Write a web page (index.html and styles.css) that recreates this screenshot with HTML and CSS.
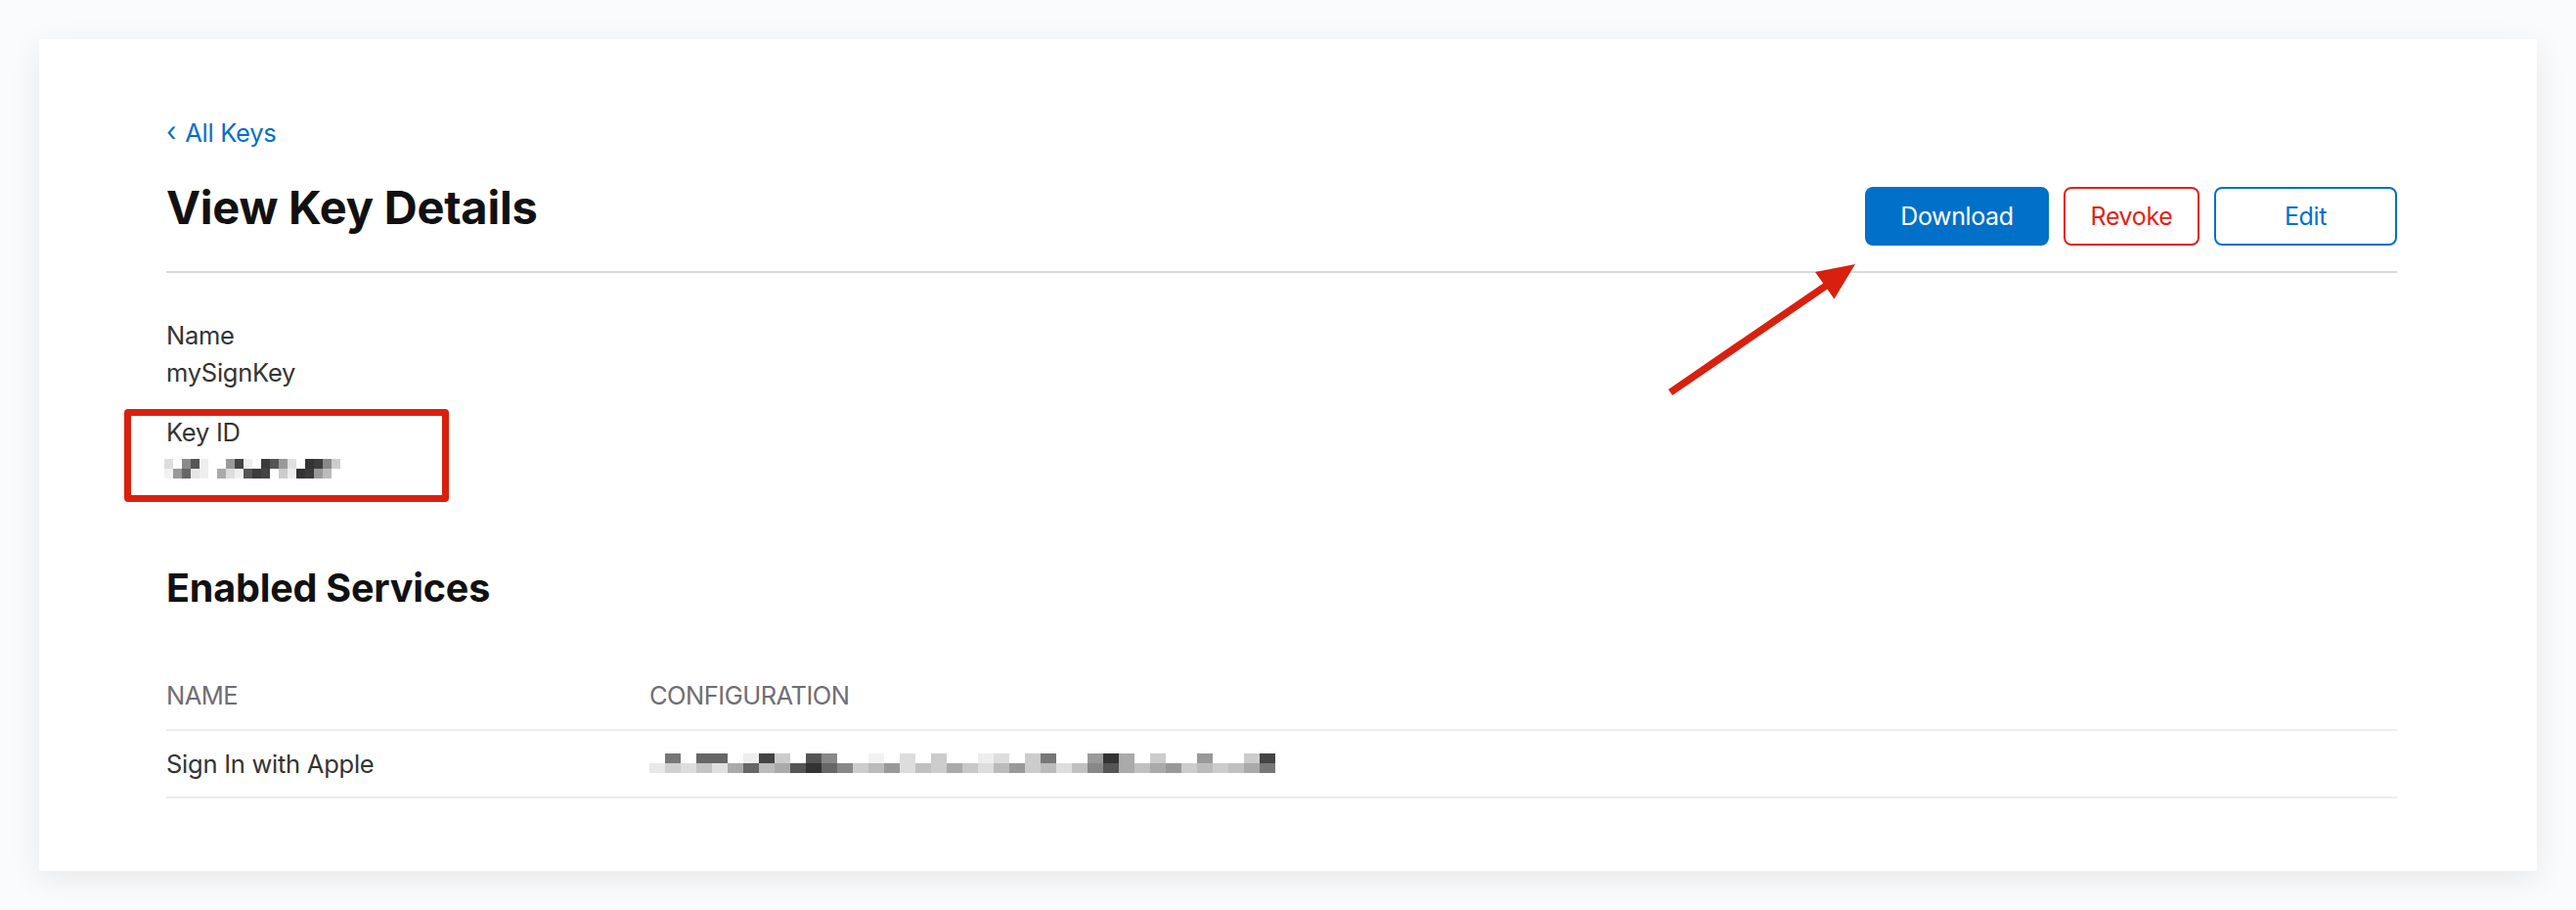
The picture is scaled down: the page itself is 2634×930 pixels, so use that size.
FILE: index.html
```html
<!DOCTYPE html>
<html lang="en">
<head>
<meta charset="utf-8">
<title>View Key Details</title>
<link rel="stylesheet" href="styles.css">
</head>
<body>
<div class="page">
  <main class="card">
    <a class="back-link" href="#"><span class="chevron">‹</span>All Keys</a>
    <div class="header-row">
      <h1 class="title">View Key Details</h1>
      <div class="actions">
        <button class="btn btn-download">Download</button>
        <button class="btn btn-revoke">Revoke</button>
        <button class="btn btn-edit">Edit</button>
      </div>
    </div>

    <div class="field">
      <div class="field-label">Name</div>
      <div class="field-value">mySignKey</div>
    </div>
    <div class="field field-highlight">
      <div class="field-label">Key ID</div>
      <div class="field-value"><span class="mosaic mosaic-key" aria-label="redacted"></span></div>
    </div>

    <h2 class="section-title">Enabled Services</h2>
    <div class="table">
      <div class="table-row table-head">
        <div class="cell">Name</div>
        <div class="cell">Configuration</div>
      </div>
      <div class="table-row">
        <div class="cell">Sign In with Apple</div>
        <div class="cell cell-mosaic"><span class="mosaic mosaic-config" aria-label="redacted"></span></div>
      </div>
    </div>

    <svg class="annotation-arrow" width="210" height="150" viewBox="0 0 210 150" aria-hidden="true">
      <line x1="8" y1="141" x2="170" y2="30" stroke="#d9200f" stroke-width="7.5"/>
      <polygon points="197,10 175.5,45.5 156,18" fill="#d9200f"/>
    </svg>
  </main>
</div>
</body>
</html>
```

FILE: styles.css
```css
*, *::before, *::after { box-sizing: border-box; }

html, body {
  margin: 0;
  padding: 0;
}

body {
  background: #fafbfc;
  font-family: Inter, "Noto Sans", "Liberation Sans", sans-serif;
  color: #333333;
}

.page {
  padding: 40px;
  height: 930px;
}

.card {
  position: relative;
  height: 850px;
  background: #ffffff;
  box-shadow: 0 8px 30px rgba(0, 0, 0, 0.08);
  padding: 77px 143px 0 130px;
}

.back-link {
  display: inline-flex;
  align-items: center;
  font-size: 25.5px;
  line-height: 38px;
  color: #0070c9;
  text-decoration: none;
  letter-spacing: -0.01em;
}

.chevron {
  font-size: 27px;
  margin-right: 9px;
  position: relative;
  top: -1px;
}

.header-row {
  display: flex;
  justify-content: space-between;
  align-items: flex-start;
  margin-top: 31px;
  padding-bottom: 26px;
  border-bottom: 2px solid #d9d9d9;
}

.title {
  margin: 0;
  font-size: 47px;
  line-height: 52px;
  font-weight: 700;
  color: #111111;
  letter-spacing: -0.005em;
}

.actions {
  display: flex;
  gap: 15px;
  margin-top: 5px;
}

.btn {
  height: 60px;
  border-radius: 8px;
  border: 2px solid #0070c9;
  background: #ffffff;
  color: #0070c9;
  font-family: Inter, "Noto Sans", "Liberation Sans", sans-serif;
  font-size: 25px;
  letter-spacing: -0.015em;
  padding: 0;
  cursor: pointer;
}

.btn-download {
  width: 188px;
  background: #0070c9;
  color: #ffffff;
}

.btn-revoke {
  width: 139px;
  border-color: #e2231a;
  color: #e2231a;
}

.btn-edit {
  width: 187px;
}

.field {
  margin-top: 45px;
  font-size: 25.5px;
  line-height: 37.5px;
  letter-spacing: -0.01em;
}

.field + .field {
  margin-top: 24px;
}

.field-label,
.field-value {
  color: #333333;
}

.field-value {
  height: 37.5px;
  display: flex;
  align-items: center;
}

.field-highlight {
  position: relative;
}

.field-highlight::before {
  content: "";
  position: absolute;
  left: -43px;
  top: -5px;
  width: 332px;
  height: 95px;
  border: 7px solid #d9200f;
  border-radius: 4px;
}

.mosaic {
  display: block;
  height: 20px;
  background-repeat: no-repeat;
  background-size: 100% 10px, 100% 10px;
  background-position: 0 0, 0 10px;
}

.mosaic-key {
  width: 180px;
  margin-left: -2px;
  background-image:
    linear-gradient(to right,
      #dddddd 0 9px, #ffffff 9px 18px, #8a8a8a 18px 27px, #555555 27px 36px,
      #eeeeee 36px 45px, #ffffff 45px 54px, #ffffff 54px 63px, #9a9a9a 63px 72px,
      #444444 72px 81px, #eeeeee 81px 90px, #ffffff 90px 99px, #3a3a3a 99px 108px,
      #555555 108px 117px, #999999 117px 126px, #e0e0e0 126px 135px, #ffffff 135px 144px,
      #333333 144px 153px, #3c3c3c 153px 162px, #888888 162px 171px, #cccccc 171px 180px),
    linear-gradient(to right,
      #f2f2f2 0 9px, #999999 9px 18px, #666666 18px 27px, #e5e5e5 27px 36px,
      #eeeeee 36px 45px, #ffffff 45px 54px, #aaaaaa 54px 63px, #dddddd 63px 72px,
      #f0f0f0 72px 81px, #555555 81px 90px, #3c3c3c 90px 99px, #444444 99px 108px,
      #ffffff 108px 117px, #cccccc 117px 126px, #eeeeee 126px 135px, #333333 135px 144px,
      #3a3a3a 144px 153px, #999999 153px 162px, #bbbbbb 162px 171px, #ffffff 171px 180px);
}

.section-title {
  margin: 80px 0 0;
  font-size: 39.5px;
  line-height: 46px;
  font-weight: 700;
  color: #111111;
  letter-spacing: -0.005em;
}

.table {
  margin-top: 68px;
}

.table-row {
  display: grid;
  grid-template-columns: 494px 1fr;
  font-size: 25.5px;
  line-height: 37.5px;
  letter-spacing: -0.01em;
  padding: 15px 0;
  border-bottom: 2px solid #ededed;
}

.table-head {
  padding-top: 0;
  color: #6e6e73;
  text-transform: uppercase;
  letter-spacing: -0.02em;
}

.cell-mosaic {
  display: flex;
  align-items: center;
}

.mosaic-config {
  width: 640px;
  height: 20px;
  background-image:
    linear-gradient(to right,
      #ffffff 0 16px, #777777 16px 32px, #ffffff 32px 48px, #666666 48px 64px,
      #666666 64px 80px, #ffffff 80px 96px, #eeeeee 96px 112px, #444444 112px 128px,
      #cccccc 128px 144px, #ffffff 144px 160px, #555555 160px 176px, #888888 176px 192px,
      #ffffff 192px 208px, #ffffff 208px 224px, #f2f2f2 224px 240px, #ffffff 240px 256px,
      #dddddd 256px 272px, #ffffff 272px 288px, #cccccc 288px 304px, #ffffff 304px 320px,
      #ffffff 320px 336px, #eeeeee 336px 352px, #dddddd 352px 368px, #ffffff 368px 384px,
      #cccccc 384px 400px, #777777 400px 416px, #ffffff 416px 432px, #ffffff 432px 448px,
      #999999 448px 464px, #333333 464px 480px, #aaaaaa 480px 496px, #ffffff 496px 512px,
      #cccccc 512px 528px, #ffffff 528px 544px, #ffffff 544px 560px, #999999 560px 576px,
      #ffffff 576px 592px, #ffffff 592px 608px, #cccccc 608px 624px, #444444 624px 640px),
    linear-gradient(to right,
      #e8e8e8 0 16px, #cfcfcf 16px 32px, #dddddd 32px 48px, #c4c4c4 48px 64px,
      #e0e0e0 64px 80px, #aaaaaa 80px 96px, #666666 96px 112px, #bbbbbb 112px 128px,
      #aaaaaa 128px 144px, #555555 144px 160px, #333333 160px 176px, #666666 176px 192px,
      #888888 192px 208px, #cccccc 208px 224px, #bbbbbb 224px 240px, #999999 240px 256px,
      #dddddd 256px 272px, #c0c0c0 272px 288px, #cccccc 288px 304px, #aaaaaa 304px 320px,
      #c8c8c8 320px 336px, #dddddd 336px 352px, #bbbbbb 352px 368px, #999999 368px 384px,
      #cccccc 384px 400px, #bbbbbb 400px 416px, #dddddd 416px 432px, #c0c0c0 432px 448px,
      #888888 448px 464px, #555555 464px 480px, #aaaaaa 480px 496px, #c0c0c0 496px 512px,
      #aaaaaa 512px 528px, #999999 528px 544px, #cccccc 544px 560px, #bbbbbb 560px 576px,
      #cccccc 576px 592px, #c0c0c0 592px 608px, #aaaaaa 608px 624px, #777777 624px 640px);
}

.annotation-arrow {
  position: absolute;
  left: 1660px;
  top: 220px;
}
```
